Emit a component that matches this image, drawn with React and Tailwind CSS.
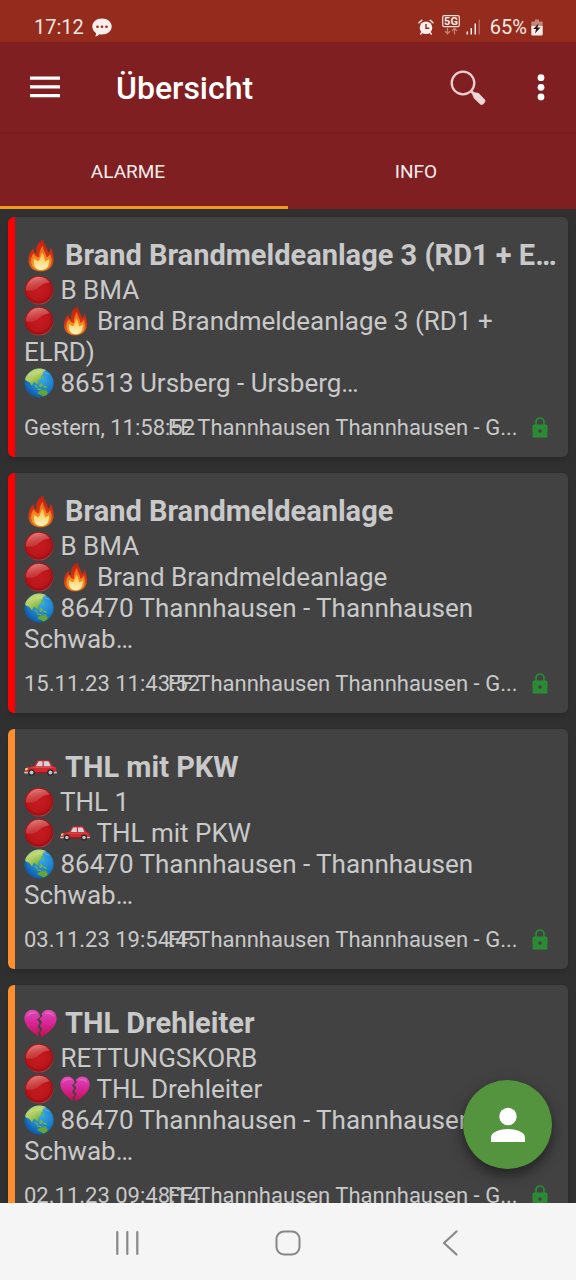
import React from "react";

function Flame({ className }) {
  return (
    <svg viewBox="0 0 32 32" className={className} aria-hidden="true">
      <defs>
        <linearGradient id="flameOuter" x1="0" y1="0" x2="0" y2="1">
          <stop offset="0" stopColor="#c41f10" />
          <stop offset="0.55" stopColor="#d8340f" />
          <stop offset="1" stopColor="#e8701c" />
        </linearGradient>
        <linearGradient id="flameMid" x1="0" y1="0" x2="0" y2="1">
          <stop offset="0" stopColor="#e8661a" />
          <stop offset="1" stopColor="#f6a92c" />
        </linearGradient>
        <linearGradient id="flameInner" x1="0" y1="0" x2="0" y2="1">
          <stop offset="0" stopColor="#f8b83a" />
          <stop offset="0.6" stopColor="#fbe08a" />
          <stop offset="1" stopColor="#fdf3c0" />
        </linearGradient>
      </defs>
      <path fill="url(#flameOuter)" d="M18.500.5C13 3.500 11 8 12 14.500c-2-1-3-3-2.500-6C6 12 4.300 16 4.300 21c0 6 5 10.300 12 10.300S28.700 27 28.700 20c0-5-1-9-3-12-.2 2.500-.8 4-2 5.500C22.500 8 20 6 18.500.5z" />
      <path fill="url(#flameMid)" d="M18 6.500c-3.300 4-2.500 8-3.500 11.500-2 0-4-2-5-4.500C7.500 16.500 6.500 19 7 23c1 4.500 4 7.300 9.500 7.300S26 27 26.500 21c.2-2.500-.3-4.500-1.300-6.500-1 2-1.800 3-3.200 3.500C21 14 19 11 18 6.500z" />
      <path fill="url(#flameInner)" d="M17.500 13c-1.500 3-1 6-3.500 8.500-1.500 0-3-1-4-2.500-1.500 6 1 11 6.500 11S25 26 24 19.500c-1 1.300-2 2-3.500 2C19.500 18.500 19.500 16 17.500 13z" />
    </svg>
  );
}

function RedBall({ className }) {
  return (
    <svg viewBox="0 0 32 32" className={className} aria-hidden="true">
      <defs>
        <radialGradient id="ballBody" cx="0.48" cy="0.45" r="0.55">
          <stop offset="0" stopColor="#c41a20" />
          <stop offset="0.7" stopColor="#bb161b" />
          <stop offset="0.92" stopColor="#9a1014" />
          <stop offset="1" stopColor="#bd4340" />
        </radialGradient>
        <linearGradient id="ballShine" x1="0.2" y1="0" x2="0.6" y2="1">
          <stop offset="0" stopColor="#e2908c" stopOpacity="0.95" />
          <stop offset="1" stopColor="#d04444" stopOpacity="0.35" />
        </linearGradient>
      </defs>
      <circle cx="16" cy="16" r="15.300" fill="url(#ballBody)" />
      <path fill="url(#ballShine)" d="M2 16.500C2 8 8.500 1.800 16 1.800c5 0 9 2.200 11.500 6.200-5.500.5-8.500 2.200-12 5.500-4 3-8 4-13.500 3z" />
    </svg>
  );
}

function Globe({ className }) {
  return (
    <svg viewBox="0 0 32 32" className={className} aria-hidden="true">
      <defs>
        <radialGradient id="globeSea" cx="0.6" cy="0.35" r="0.68">
          <stop offset="0" stopColor="#35abe6" />
          <stop offset="0.6" stopColor="#1c80cb" />
          <stop offset="1" stopColor="#1255a0" />
        </radialGradient>
        <linearGradient id="globeLand" x1="0" y1="0" x2="0.7" y2="1">
          <stop offset="0" stopColor="#a9cf62" />
          <stop offset="0.5" stopColor="#b4cf62" />
          <stop offset="1" stopColor="#5fa52f" />
        </linearGradient>
      </defs>
      <circle cx="16" cy="16" r="15.600" fill="url(#globeSea)" />
      <path fill="url(#globeLand)" d="M1.200 11.500C3.500 5 9.500.6 16 .5c3 0 5.500.6 7.500 1.700-1.200 1.500-3.300 1.200-3.800 2.800 1 1.500 0 3-1.600 3.600.5 2-.5 3.600-2.600 4.200.5 2 0 4-1.600 4.500-1-.5-1.500-2-2.600-2.500-1.500 0-2 2-2.600 4.200C7.300 17.700 6.800 15.500 4.800 14.500c-1.600-.5-3.200-.5-3.600-3z" />
      <path fill="#79b53a" d="M11.500 17.500l2.200 1.800 1.800 2.700-1.600-.3-2.300-2.700zM16.500 17l2.700-1 .8 2.300-2 2.200-2-1.200zM18.700 10l1.800-2.800.9 1.700-1.700 2.700zM14.500 22l3.600.5v1.100l-3.600-.5zM20.500 18.500l4.200 1.400-1.200 1.300-2.600-.9z" />
      <path fill="#63a636" d="M14.500 27.500c.2-2.200 2-3.200 4.200-3.700 1.200-1 2.500-1 3 .1l1.600-1.200c.5 1.600 1.900 2.600 2.100 4.300-1 2-3 3.200-5.200 3-1.500-1.500-3.600-1.500-5.700-2.500z" />
      <path fill="#fff" opacity="0.15" d="M3 10C6 4 11 1.500 16 1.500S25 4 28 8C20 5 11 6 3 10z" />
    </svg>
  );
}

function Car({ className }) {
  return (
    <svg viewBox="0 0 32 32" className={className} aria-hidden="true">
      <path fill="#d02a2c" d="M.8 19.500c0-2 1.200-3.300 4.200-3.900l5-1 2.300-4.500c.5-.9 1.200-1.200 2.200-1.200h8.300c1.200 0 1.800.3 2.400 1.200l2.400 4.500 2.800.9c.9.400 1.200 1.300 1.100 2.500l-.3 3.300H1.500z" />
      <path fill="#cfd5dc" d="M11.500 14.800l2.200-4.100c.3-.5.600-.7 1.200-.7h3.100v4.800zM19.200 10h3.700c.7 0 1 .2 1.300.7l1.800 4.100h-6.800z" />
      <path fill="#951a1d" d="M1 20.300h30.200l-.2 1.500H1.300z" />
      <path fill="#e25a5c" d="M5.500 16.400l5-.7h17l2.500.7z" />
      <path fill="#f1dc83" d="M1.300 16.800l2.500-.5-.5 2.200-2.300.4z" />
      <path fill="#bfc2c6" d="M0 20h4v1.700H.5zM28.500 20H32l-.3 1.700h-3.200z" />
      <circle cx="7.300" cy="20.800" r="3.100" fill="#262626" />
      <circle cx="7.300" cy="20.800" r="1.900" fill="#c2c4c8" />
      <circle cx="25.600" cy="20.800" r="3.100" fill="#262626" />
      <circle cx="25.600" cy="20.800" r="1.900" fill="#c2c4c8" />
    </svg>
  );
}

function BrokenHeart({ className }) {
  return (
    <svg viewBox="0 0 32 32" className={className} aria-hidden="true">
      <defs>
        <linearGradient id="heartFill" x1="0" y1="0" x2="0" y2="1">
          <stop offset="0" stopColor="#dc4db6" />
          <stop offset="0.45" stopColor="#d8289b" />
          <stop offset="1" stopColor="#c20f4e" />
        </linearGradient>
      </defs>
      <path fill="url(#heartFill)" d="M14.800 6.500C13.300 4 11 2.600 8.400 2.600 4 2.600.4 5.800.4 10.800c0 7 6.600 13.200 14.100 18l-.8-3.800 1.800-2.500-2.500-3.500 2.200-3.500-2.600-3.500 3-2.500z" />
      <path fill="url(#heartFill)" d="M17 6.500c1.500-2.500 4-3.900 6.600-3.900 4.400 0 8 3.200 8 8.200 0 7.500-7 13.700-15 18.500l-.8-4.600 2-2.900-2.500-3.300 2.300-3.500-2.700-3.500 3-2.500z" />
      <path fill="#f0a0e0" opacity="0.3" d="M2.500 10C3 6.500 5.500 4.500 8.400 4.500c2 0 3.500.6 4.700 2C9 6 5.500 7 2.500 10zM19 7c1.200-1.700 2.800-2.500 4.700-2.500 3 0 5.300 2 5.800 5.500C27 7.500 23.500 6.300 19 7z" />
    </svg>
  );
}

function Lock() {
  return (
    <svg viewBox="0 0 16 21" className="mr-1 mb-0.5 h-[21px] w-4 shrink-0" role="img" aria-label="Verschlüsselt">
      <path fill="none" stroke="#2d8a34" strokeWidth="1.700" d="M4 8V5a4 4 0 0 1 8 0v3" />
      <path fill="#2d8a34" fillRule="evenodd" d="M2 7.500h12c1 0 1.500.5 1.500 1.500v10c0 1-.5 1.500-1.500 1.500H2C1 20.500.5 20 .5 19V9c0-1 .5-1.500 1.500-1.500zM8 12.200a1.800 1.800 0 1 0 0 3.600 1.800 1.800 0 0 0 0-3.600z" />
    </svg>
  );
}

const icons = { flame: Flame, ball: RedBall, globe: Globe, car: Car, heart: BrokenHeart };

function Line({ marks, children }) {
  return (
    <p>
      {marks.map((name, i) => {
        const Icon = icons[name];
        return (
          <React.Fragment key={i}>
            <Icon className="-my-1 inline-block size-[30px] align-[-2px]" />{" "}
          </React.Fragment>
        );
      })}
      {children}
    </p>
  );
}

const alarms = [
  {
    icon: "flame",
    border: "border-[#fe0000]",
    heading: "Brand Brandmeldeanlage 3 (RD1 + E…",
    keyword: "B BMA",
    detail: "Brand Brandmeldeanlage 3 (RD1 + ELRD)",
    place: "86513 Ursberg - Ursberg…",
    time: "Gestern, 11:58:52",
  },
  {
    icon: "flame",
    border: "border-[#fe0000]",
    heading: "Brand Brandmeldeanlage",
    keyword: "B BMA",
    detail: "Brand Brandmeldeanlage",
    place: "86470 Thannhausen - Thannhausen Schwab…",
    time: "15.11.23 11:43:52",
  },
  {
    icon: "car",
    border: "border-[#ff8f2e]",
    heading: "THL mit PKW",
    keyword: "THL 1",
    detail: "THL mit PKW",
    place: "86470 Thannhausen - Thannhausen Schwab…",
    time: "03.11.23 19:54:45",
  },
  {
    icon: "heart",
    border: "border-[#ff8f2e]",
    heading: "THL Drehleiter",
    keyword: "RETTUNGSKORB",
    detail: "THL Drehleiter",
    place: "86470 Thannhausen - Thannhausen Schwab…",
    time: "02.11.23 09:48:14",
  },
];

function AlarmCard({ alarm }) {
  const Icon = icons[alarm.icon];
  return (
    <article className={`rounded-md border-l-[7px] bg-[#424242] pt-5 pr-4 pb-3.5 pl-[9px] text-[#c9c9c9] shadow-md ${alarm.border}`}>
      <h2 className="flex items-center gap-2 text-[29px] leading-9 font-bold">
        <Icon className="size-[33px] shrink-0" />
        <span className="whitespace-nowrap">{alarm.heading}</span>
      </h2>
      <div className="mt-0.5 text-[26px] leading-[31px]">
        <Line marks={["ball"]}>{alarm.keyword}</Line>
        <Line marks={["ball", alarm.icon]}>{alarm.detail}</Line>
        <Line marks={["globe"]}>{alarm.place}</Line>
      </div>
      <div className="mt-3.5 flex items-center text-[22px] leading-[30px] whitespace-nowrap">
        <time className="w-36 shrink-0">{alarm.time}</time>
        <span className="flex-1">FF Thannhausen Thannhausen - G...</span>
        <Lock />
      </div>
    </article>
  );
}

function StatusBar() {
  return (
    <div className="flex h-[42px] items-center justify-between bg-[#942b1c] pt-3 pr-[33px] pl-[34px] text-xl leading-[30px] text-[#fbe9e4]">
      <div className="flex items-center gap-2">
        <span>17:12</span>
        <svg viewBox="0 0 20 19" className="h-[19px] w-5" aria-hidden="true">
          <path fill="#fbeeea" d="M10 .5c5.500 0 9.700 3.500 9.700 8s-4.200 8-9.700 8c-1 0-1.800-.1-2.600-.3-1 1.200-2.400 2-4.200 2.300.6-1 .9-2.300.7-3.500C1.800 13.500.3 11.200.3 8.500c0-4.500 4.200-8 9.700-8z" />
          <g fill="#942b1c"><circle cx="5.500" cy="8.700" r="1.300" /><circle cx="10" cy="8.700" r="1.300" /><circle cx="14.500" cy="8.700" r="1.300" /></g>
        </svg>
      </div>
      <div className="flex items-center">
        <svg viewBox="0 0 16 16" className="size-4" aria-hidden="true">
          <circle cx="8" cy="8.800" r="6.300" fill="#fbeeea" />
          <path fill="none" stroke="#fbeeea" strokeWidth="1.500" strokeLinecap="round" d="M1 3.800L3.800 1.300M15 3.800L12.200 1.300M4 13.500L2.700 15M12 13.500l1.300 1.500" />
          <path fill="none" stroke="#942b1c" strokeWidth="1.400" d="M8 5v4.200h3.300" />
        </svg>
        <svg viewBox="0 0 18 20" className="mb-1 ml-2 h-5 w-[18px]" aria-label="5G" role="img">
          <rect x="0.700" y="0.700" width="16.600" height="11" rx="1.500" fill="none" stroke="#f7e2dc" strokeWidth="1.200" />
          <text x="9" y="10.100" textAnchor="middle" fontSize="11" fontWeight="700" fontFamily="Roboto, sans-serif" fill="#fbeeea">5G</text>
          <path fill="none" stroke="#c78378" strokeWidth="1.200" d="M5.500 12.500v6M3 16l2.500 2.800L8 16M12.500 19.500v-6M10 16l2.500-2.800L15 16" />
        </svg>
        <svg viewBox="0 0 16 16" className="ml-1.5 size-4" aria-hidden="true">
          <path fill="#fbeeea" d="M.5 12.500H2v3H.5zM4.500 9H6v6.500H4.500zM8.500 4.500H10v11H8.500z" />
          <path fill="#b9695c" d="M12.500.500H14v15h-1.500z" />
        </svg>
        <span className="ml-2">65%</span>
        <svg viewBox="0 0 12 17" className="ml-1 h-[17px] w-3" aria-hidden="true">
          <path fill="#c4897e" d="M4 .5h4v2h2.500c.8 0 1.200.5 1.200 1.200V8H.3V3.700c0-.7.4-1.200 1.200-1.200H4z" />
          <path fill="#fbeeea" d="M.3 7h11.400v8.300c0 .8-.4 1.200-1.200 1.200h-9C.7 16.500.3 16.100.3 15.300z" />
          <path fill="#331713" d="M7.500 4.500L2.300 10H5l-1 4.500 5.500-6H6.500z" />
        </svg>
      </div>
    </div>
  );
}

export default function App() {
  return (
    <div className="flex h-screen flex-col bg-[#303030] font-[Roboto,sans-serif]">
      <header className="shrink-0 bg-[#7f1f21] text-white">
        <StatusBar />
        <div className="flex h-[92px] items-center border-b-2 border-[#781d1e] pr-[31px] pl-[30px]">
          <button type="button" aria-label="Menü">
            <svg viewBox="0 0 30 22" className="h-[22px] w-[30px]" aria-hidden="true">
              <path fill="#fff" d="M0 .5h30v3.300H0zM0 9.300h30v3.300H0zM0 18h30v3.300H0z" />
            </svg>
          </button>
          <h1 className="ml-14 flex-1 pt-0.5 text-[32px] leading-10 font-medium">Übersicht</h1>
          <button type="button" aria-label="Suchen" className="pt-0.5">
            <svg viewBox="0 0 36 36" className="size-9" aria-hidden="true">
              <circle cx="13" cy="13" r="11.300" fill="none" stroke="#f0cfd0" strokeWidth="2.300" />
              <path stroke="#e9c9ca" strokeWidth="2.800" d="M20.500 20.500l4 4" />
              <path fill="#ecd6d6" d="M22.300 24.500l2.300-2.300 4 .9 6.200 6.500c.9 1 .8 2-.2 3.200l-1.400 1.400c-1.100.9-2.200.9-3.100 0l-6.300-6z" />
            </svg>
          </button>
          <button type="button" aria-label="Weitere Optionen" className="ml-[51px]">
            <svg viewBox="0 0 8 28" className="h-7 w-2" aria-hidden="true">
              <g fill="#fff"><circle cx="4" cy="4.700" r="3.400" /><circle cx="4" cy="14.300" r="3.400" /><circle cx="4" cy="23.900" r="3.400" /></g>
            </svg>
          </button>
        </div>
        <div role="tablist" className="grid h-[75px] grid-cols-2 text-[19px] text-[#fbeeee]">
          <button type="button" role="tab" aria-selected="true" className="border-y-3 border-t-transparent border-b-[#f39a1c] pt-0.5 pr-8">ALARME</button>
          <button type="button" role="tab" aria-selected="false" className="border-y-3 border-transparent pt-0.5 pr-8">INFO</button>
        </div>
      </header>

      <main className="relative min-h-0 flex-1">
        <div className="flex h-full flex-col gap-4 overflow-hidden p-2">
          {alarms.map((alarm) => (
            <div key={alarm.time} className="shrink-0">
              <AlarmCard alarm={alarm} />
            </div>
          ))}
        </div>
        <button type="button" aria-label="Profil" className="absolute right-6 bottom-[34px] flex size-[89px] items-center justify-center rounded-full bg-[#54943f] shadow-[0_6px_14px_rgba(0,0,0,0.5)]">
          <svg viewBox="0 0 36 36" className="size-9" aria-hidden="true">
            <circle cx="18" cy="9.500" r="8.700" fill="#fff" />
            <path fill="#fff" d="M1 35v-4.500c0-5.500 9-8.500 17-8.500s17 3 17 8.500V35z" />
          </svg>
        </button>
      </main>

      <nav className="grid h-[77px] shrink-0 grid-cols-[1fr_36px_1fr] items-center bg-[#f5f5f5] px-[108px] pt-0.5" aria-label="System">
        <button type="button" aria-label="Letzte Apps" className="justify-self-start px-1.5">
          <svg viewBox="0 0 26 26" className="size-[26px]" aria-hidden="true">
            <path stroke="#888" strokeWidth="2.200" strokeLinecap="round" d="M3.300 2v22M13.300 2v22M23.300 2v22" />
          </svg>
        </button>
        <button type="button" aria-label="Startseite" className="justify-self-center">
          <svg viewBox="0 0 26 26" className="size-[26px]" aria-hidden="true">
            <rect x="1.500" y="1.500" width="23" height="23" rx="7.500" fill="none" stroke="#888" strokeWidth="2" />
          </svg>
        </button>
        <button type="button" aria-label="Zurück" className="justify-self-end px-1">
          <svg viewBox="0 0 26 26" className="size-[26px]" aria-hidden="true">
            <path fill="none" stroke="#888" strokeWidth="2.200" strokeLinecap="round" strokeLinejoin="round" d="M18.500 1.500L6 13l12.500 11.500" />
          </svg>
        </button>
      </nav>
    </div>
  );
}
